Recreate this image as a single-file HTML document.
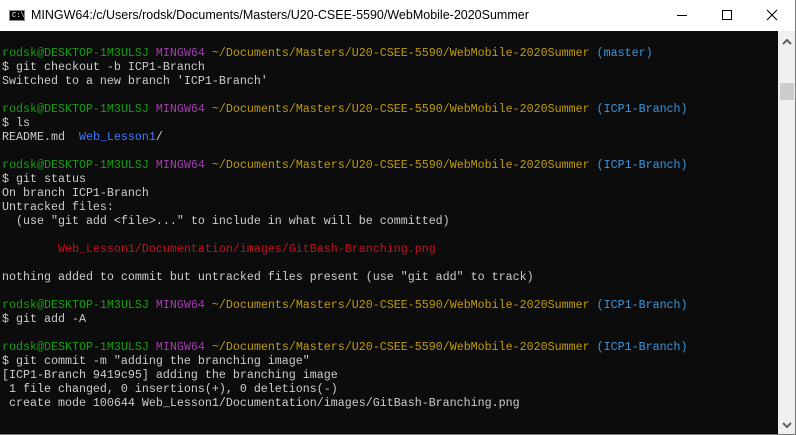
<!DOCTYPE html>
<html><head><meta charset="utf-8"><style>
html,body{margin:0;padding:0;width:796px;height:435px;overflow:hidden;background:#7a7a7a;font-family:"Liberation Sans",sans-serif}
#win{position:absolute;left:0;top:0;width:795px;height:434px;background:#fff}
#title{position:absolute;left:0;top:0;width:795px;height:31px;background:#fff}
#title .t{position:absolute;left:31px;top:8px;font-size:12.5px;color:#000}
#icon{position:absolute;left:9px;top:10px;width:16px;height:11px;background:#000;border:1px solid #888;box-sizing:border-box}
#icon span{position:absolute;left:2px;top:1px;color:#fff;font:7px "Liberation Mono",monospace}
#term{position:absolute;left:0;top:31px;width:778px;height:403px;background:#0c0c0c}
#sb{position:absolute;left:778px;top:31px;width:17px;height:403px;background:#f0f0f0}
#thumb{position:absolute;left:2px;top:52px;width:14px;height:17px;background:#cdcdcd}
pre{position:absolute;left:2px;top:15px;margin:0;font:11.67px/14px "Liberation Mono",monospace;color:#cccccc}
.g{color:#13a10e}.p{color:#a23cb0}.y{color:#c19c00}.c{color:#3a96dd}.b{color:#3b78ff}.r{color:#c50f1f}
</style></head><body><div id="win">
<div id="title"><div id="icon"><span>C:\</span></div><div class="t">MINGW64:/c/Users/rodsk/Documents/Masters/U20-CSEE-5590/WebMobile-2020Summer</div>
<svg style="position:absolute;left:660px;top:0" width="136" height="31"><line x1="17" y1="15.5" x2="27" y2="15.5" stroke="#000"/><rect x="62.5" y="10.5" width="9" height="9" fill="none" stroke="#000"/><path d="M107 10L117 20M117 10L107 20" stroke="#000"/></svg></div>
<div id="term"><pre>
<span class="g">rodsk@DESKTOP-1M3ULSJ</span> <span class="p">MINGW64</span> <span class="y">~/Documents/Masters/U20-CSEE-5590/WebMobile-2020Summer</span> <span class="c">(master)</span>
$ git checkout -b ICP1-Branch
Switched to a new branch 'ICP1-Branch'

<span class="g">rodsk@DESKTOP-1M3ULSJ</span> <span class="p">MINGW64</span> <span class="y">~/Documents/Masters/U20-CSEE-5590/WebMobile-2020Summer</span> <span class="c">(ICP1-Branch)</span>
$ ls
README.md  <span class="b">Web_Lesson1</span>/

<span class="g">rodsk@DESKTOP-1M3ULSJ</span> <span class="p">MINGW64</span> <span class="y">~/Documents/Masters/U20-CSEE-5590/WebMobile-2020Summer</span> <span class="c">(ICP1-Branch)</span>
$ git status
On branch ICP1-Branch
Untracked files:
  (use "git add &lt;file&gt;..." to include in what will be committed)

        <span class="r">Web_Lesson1/Documentation/images/GitBash-Branching.png</span>

nothing added to commit but untracked files present (use "git add" to track)

<span class="g">rodsk@DESKTOP-1M3ULSJ</span> <span class="p">MINGW64</span> <span class="y">~/Documents/Masters/U20-CSEE-5590/WebMobile-2020Summer</span> <span class="c">(ICP1-Branch)</span>
$ git add -A

<span class="g">rodsk@DESKTOP-1M3ULSJ</span> <span class="p">MINGW64</span> <span class="y">~/Documents/Masters/U20-CSEE-5590/WebMobile-2020Summer</span> <span class="c">(ICP1-Branch)</span>
$ git commit -m "adding the branching image"
[ICP1-Branch 9419c95] adding the branching image
 1 file changed, 0 insertions(+), 0 deletions(-)
 create mode 100644 Web_Lesson1/Documentation/images/GitBash-Branching.png
</pre></div>
<div id="sb"><div id="thumb"></div>
<svg style="position:absolute;left:4px;top:8px" width="10" height="6"><path d="M1 5L5 1L9 5" fill="none" stroke="#606060" stroke-width="2"/></svg>
<svg style="position:absolute;left:4px;top:391px" width="10" height="6"><path d="M1 1L5 5L9 1" fill="none" stroke="#606060" stroke-width="2"/></svg>
</div>
</div></body></html>
